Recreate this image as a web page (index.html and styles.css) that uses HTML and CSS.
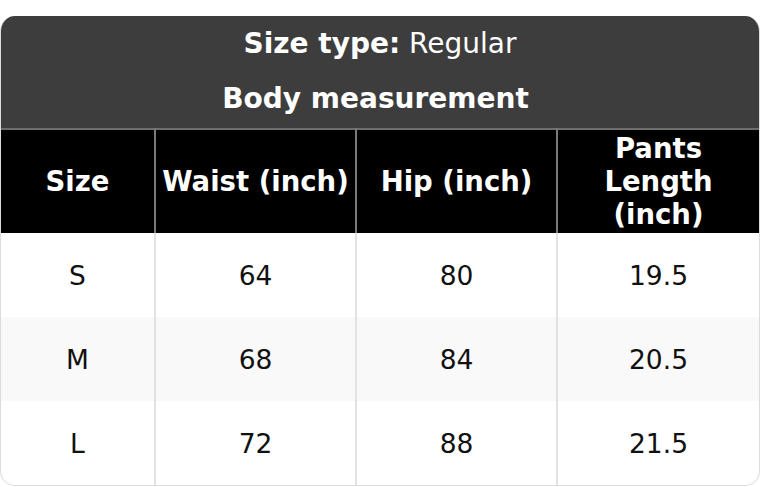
FILE: index.html
```html
<!DOCTYPE html>
<html>
<head>
<meta charset="utf-8">
<link rel="stylesheet" href="styles.css">
</head>
<body>
<div class="card">
  <div class="title">
    <div class="title-line"><b>Size type:</b> Regular</div>
    <div class="title-line title-sub"><b>Body measurement</b></div>
  </div>
  <table class="sizes">
    <colgroup>
      <col class="c1"><col class="c2"><col class="c3"><col class="c4">
    </colgroup>
    <thead>
      <tr>
        <th>Size</th>
        <th>Waist (inch)</th>
        <th>Hip (inch)</th>
        <th>Pants<br>Length<br>(inch)</th>
      </tr>
    </thead>
    <tbody>
      <tr><td>S</td><td>64</td><td>80</td><td>19.5</td></tr>
      <tr class="alt"><td>M</td><td>68</td><td>84</td><td>20.5</td></tr>
      <tr><td>L</td><td>72</td><td>88</td><td>21.5</td></tr>
    </tbody>
  </table>
</div>
</body>
</html>
```
FILE: styles.css
```css
html, body {
  margin: 0;
  padding: 0;
  background: #ffffff;
}
body {
  font-family: "DejaVu Sans", sans-serif;
  font-size: 26.5px;
}
.card {
  margin-top: 16px;
  width: 758px;
  border: 1px solid #dcdcdc;
  border-top: none;
  border-radius: 15px;
  overflow: hidden;
}
.title {
  background: #3d3d3d;
  color: #ffffff;
  text-align: center;
  font-size: 28px;
}
.title-line {
  height: 56px;
  line-height: 55px;
}
.title-sub {
  padding-right: 9px;
  line-height: 54px;
}
.sizes {
  width: 100%;
  border-collapse: collapse;
  table-layout: fixed;
}
.c1 { width: 154px; }
.c2 { width: 201px; }
.c3 { width: 201px; }
.c4 { width: 202px; }
.sizes th {
  background: #000000;
  color: #ffffff;
  font-weight: bold;
  font-size: 27.5px;
  height: 103px;
  line-height: 33px;
  padding: 0;
  border-top: 2px solid #6e6e6e;
  border-right: 2px solid #7a7a7a;
  text-align: center;
  vertical-align: middle;
}
.sizes th:last-child,
.sizes td:last-child {
  border-right: none;
}
.sizes td {
  height: 84px;
  padding: 0;
  text-align: center;
  vertical-align: middle;
  color: #111111;
  border-right: 2px solid #e2e2e2;
}
.sizes tr.alt td {
  background: #f9f9f9;
}
```
